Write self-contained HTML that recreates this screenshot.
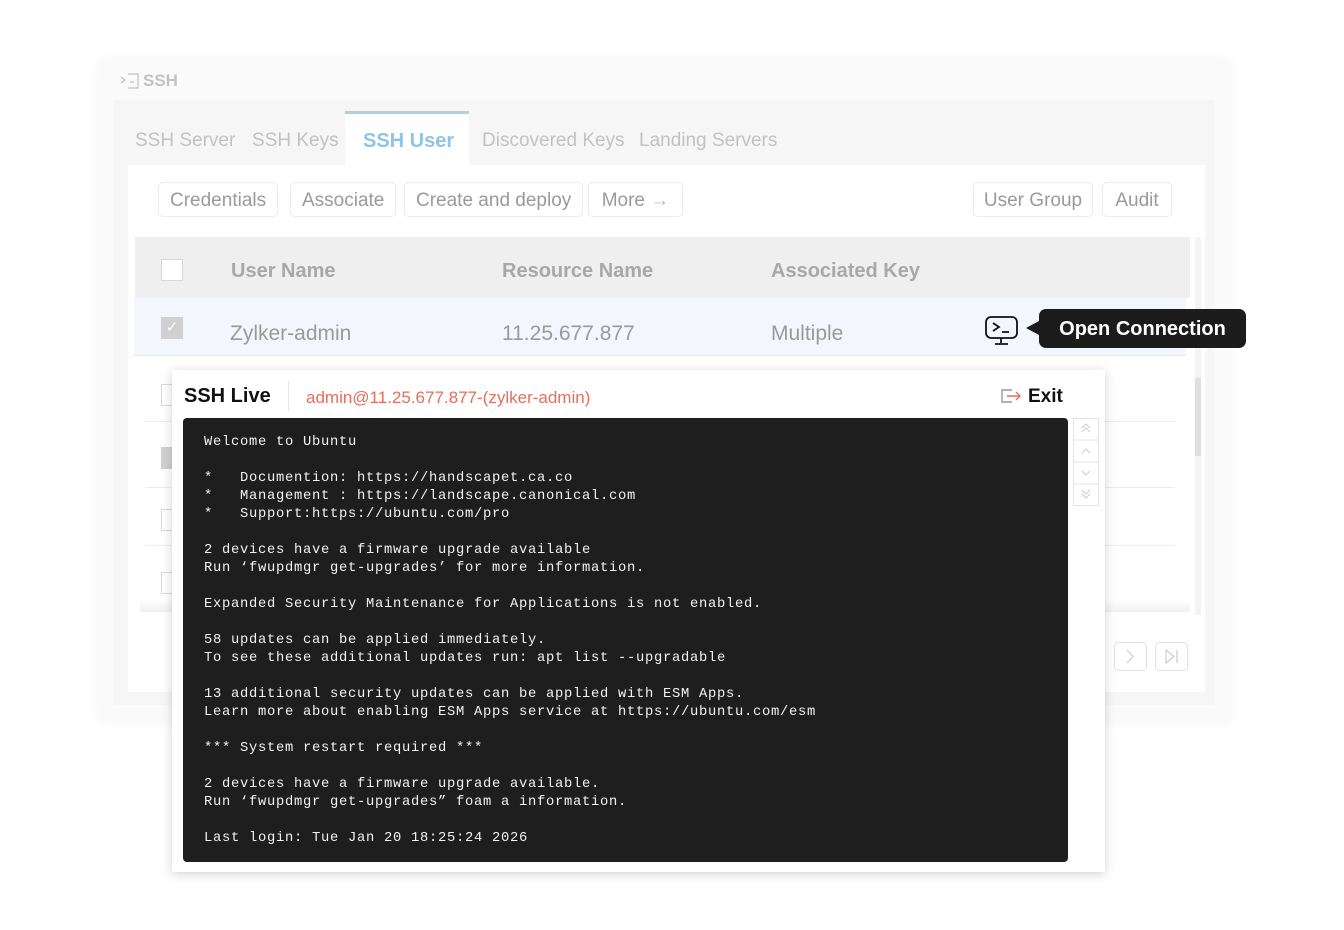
<!DOCTYPE html>
<html><head><meta charset="utf-8"><style>
*{box-sizing:border-box;margin:0;padding:0}
body{width:1344px;height:930px;background:#fff;position:relative;overflow:hidden;font-family:"Liberation Sans",sans-serif}
.abs{position:absolute}
.outer{left:98px;top:60px;width:1134px;height:662px;background:#fafafa;box-shadow:0 0 14px rgba(0,0,0,.04);border-radius:6px}
.inner{left:113px;top:100px;width:1102px;height:605px;background:#f6f6f6}
.panel{left:128px;top:165px;width:1077px;height:527px;background:#fff}
.tab{top:130px;font-size:19px;color:#c2c2c2}
.btn{top:182px;height:35px;border:1px solid #ececec;border-radius:5px;font-size:19px;color:#9a9a9a;line-height:35px;padding:0 11px;background:#fff;white-space:nowrap;text-align:center}
.hd{top:260px;font-size:20px;font-weight:bold;color:#a8a8a8}
.cell{top:322px;font-size:21px;color:#9a9a9a}
.cb{width:22px;height:22px;border:1.5px solid #d8d8d8;background:#fff}
.line{left:145px;width:1030px;height:1px;background:#ececec}
.term{font-family:"Liberation Mono",monospace;font-size:13.8px;letter-spacing:.72px;color:#f2f2f2;line-height:18px;white-space:pre}
</style></head><body>
<div class="abs outer"></div>
<svg class="abs" style="left:120px;top:73px" width="20" height="16" viewBox="0 0 20 16"><path d="M1 4l4 3-4 3M8 1h10v14H8" fill="none" stroke="#c2c2c2" stroke-width="1.3"/><path d="M10 9h4" stroke="#c2c2c2" stroke-width="1.3"/></svg>
<div class="abs" style="left:143px;top:71px;font-size:17px;font-weight:bold;color:#c2c2c2">SSH</div>
<div class="abs inner"></div>
<div class="abs" style="left:345px;top:111px;width:124px;height:56px;background:#fff;border-top:3px solid #a9d3ec"></div>
<div class="abs tab" style="left:135px">SSH Server</div>
<div class="abs tab" style="left:252px">SSH Keys</div>
<div class="abs tab" style="left:363px;color:#8ec5e6;font-weight:bold;font-size:20px">SSH User</div>
<div class="abs tab" style="left:482px">Discovered Keys</div>
<div class="abs tab" style="left:639px">Landing Servers</div>
<div class="abs panel"></div>
<div class="abs btn" style="left:158px">Credentials</div>
<div class="abs btn" style="left:290px">Associate</div>
<div class="abs btn" style="left:404px">Create and deploy</div>
<div class="abs btn" style="left:588px;width:95px">More <span style="color:#bbb">→</span></div>
<div class="abs btn" style="left:973px;width:120px;padding:0">User Group</div>
<div class="abs btn" style="left:1102px;width:70px;padding:0">Audit</div>
<div class="abs" style="left:135px;top:237px;width:1055px;height:61px;background:#efefef"></div>
<div class="abs" style="left:134px;top:298px;width:1052px;height:58px;background:#f3f7fd;border-bottom:1px solid #e6e9ee"></div>
<div class="abs" style="left:1195px;top:237px;width:6px;height:378px;background:#f3f3f3"></div>
<div class="abs" style="left:1195px;top:378px;width:6px;height:78px;background:#e0e0e0"></div>
<div class="abs cb" style="left:161px;top:259px"></div>
<div class="abs cb" style="left:161px;top:317px;background:#d0d0d0;border-color:#d0d0d0;color:#fff;font-size:15px;text-align:center;line-height:19px">✓</div>
<div class="abs hd" style="left:231px">User Name</div>
<div class="abs hd" style="left:502px">Resource Name</div>
<div class="abs hd" style="left:771px">Associated Key</div>
<div class="abs cell" style="left:230px">Zylker-admin</div>
<div class="abs cell" style="left:502px">11.25.677.877</div>
<div class="abs cell" style="left:771px">Multiple</div>
<div class="abs line" style="top:421px"></div>
<div class="abs line" style="top:487px"></div>
<div class="abs line" style="top:545px"></div>
<div class="abs" style="left:140px;top:600px;width:1050px;height:12px;background:linear-gradient(#fff,#f0f0f0)"></div>
<div class="abs cb" style="left:161px;top:384px"></div>
<div class="abs cb" style="left:161px;top:447px;background:#d0d0d0;border-color:#d0d0d0"></div>
<div class="abs cb" style="left:161px;top:509px"></div>
<div class="abs cb" style="left:161px;top:572px"></div>
<svg class="abs" style="left:1114px;top:642px" width="75" height="29" viewBox="0 0 75 29"><rect x=".5" y=".5" width="32" height="28" rx="4" fill="none" stroke="#e2e2e2"/><path d="M13 8l6 6.5-6 6.5" fill="none" stroke="#ccc" stroke-width="1.2"/><rect x="41.5" y=".5" width="32" height="28" rx="4" fill="none" stroke="#e2e2e2"/><path d="M52 8l8 6.5-8 6.5zM63 8v13" fill="none" stroke="#ccc" stroke-width="1.2"/></svg>
<svg class="abs" style="left:984px;top:315px" width="36" height="32" viewBox="0 0 36 32"><rect x="2" y="2" width="31" height="21" rx="5" fill="none" stroke="#111" stroke-width="1.8"/><path d="M9 8l6 4-6 4M18 17h7M17 23v5M11 29h13" fill="none" stroke="#111" stroke-width="1.8"/></svg>
<div class="abs" style="left:1026px;top:321px;width:0;height:0;border-top:7px solid transparent;border-bottom:7px solid transparent;border-right:13px solid #1c1c1c"></div>
<div class="abs" style="left:1039px;top:309px;width:207px;height:39px;background:#1c1c1c;border-radius:7px;color:#fff;font-weight:bold;font-size:20px;line-height:40px;text-align:center">Open Connection</div>
<div class="abs" style="left:172px;top:370px;width:933px;height:502px;background:#fff;box-shadow:0 2px 10px rgba(0,0,0,.18)"></div>
<div class="abs" style="left:184px;top:385px;font-size:20px;font-weight:bold;color:#111">SSH Live</div>
<div class="abs" style="left:288px;top:381px;width:1px;height:30px;background:#e6e6e6"></div>
<div class="abs" style="left:306px;top:388px;font-size:17px;color:#e2705c">admin@11.25.677.877-(zylker-admin)</div>
<svg class="abs" style="left:1000px;top:388px" width="22" height="16" viewBox="0 0 22 16"><path d="M12 2H2v12h10" fill="none" stroke="#999" stroke-width="1.4"/><path d="M7 8h13M16 4l4 4-4 4" fill="none" stroke="#e2705c" stroke-width="1.4"/></svg>
<div class="abs" style="left:1028px;top:386px;font-size:19px;font-weight:bold;color:#111">Exit</div>
<div class="abs" style="left:183px;top:418px;width:885px;height:444px;background:#1e1e1e;border-radius:4px"></div>
<div class="abs term" style="left:204px;top:434px">Welcome to Ubuntu

*   Documention: https://handscapet.ca.co
*   Management : https://landscape.canonical.com
*   Support:https://ubuntu.com/pro

2 devices have a firmware upgrade available
Run ‘fwupdmgr get-upgrades’ for more information.

Expanded Security Maintenance for Applications is not enabled.

58 updates can be applied immediately.
To see these additional updates run: apt list --upgradable

13 additional security updates can be applied with ESM Apps.
Learn more about enabling ESM Apps service at https://ubuntu.com/esm

*** System restart required ***

2 devices have a firmware upgrade available.
Run ‘fwupdmgr get-upgrades” foam a information.

Last login: Tue Jan 20 18:25:24 2026</div>
<svg class="abs" style="left:1073px;top:418px" width="26" height="88" viewBox="0 0 26 88"><g fill="none" stroke="#e4e4e4"><rect x=".5" y=".5" width="25" height="87"/><path d="M0 22h26M0 44h26M0 66h26"/></g><g fill="none" stroke="#ccc" stroke-width="1"><path d="M9 10l4-4 4 4M9 14l4-4 4 4M9 35l4-4 4 4M9 53l4 4 4-4M9 72l4 4 4-4M9 76l4 4 4-4"/></g></svg>
</body></html>
